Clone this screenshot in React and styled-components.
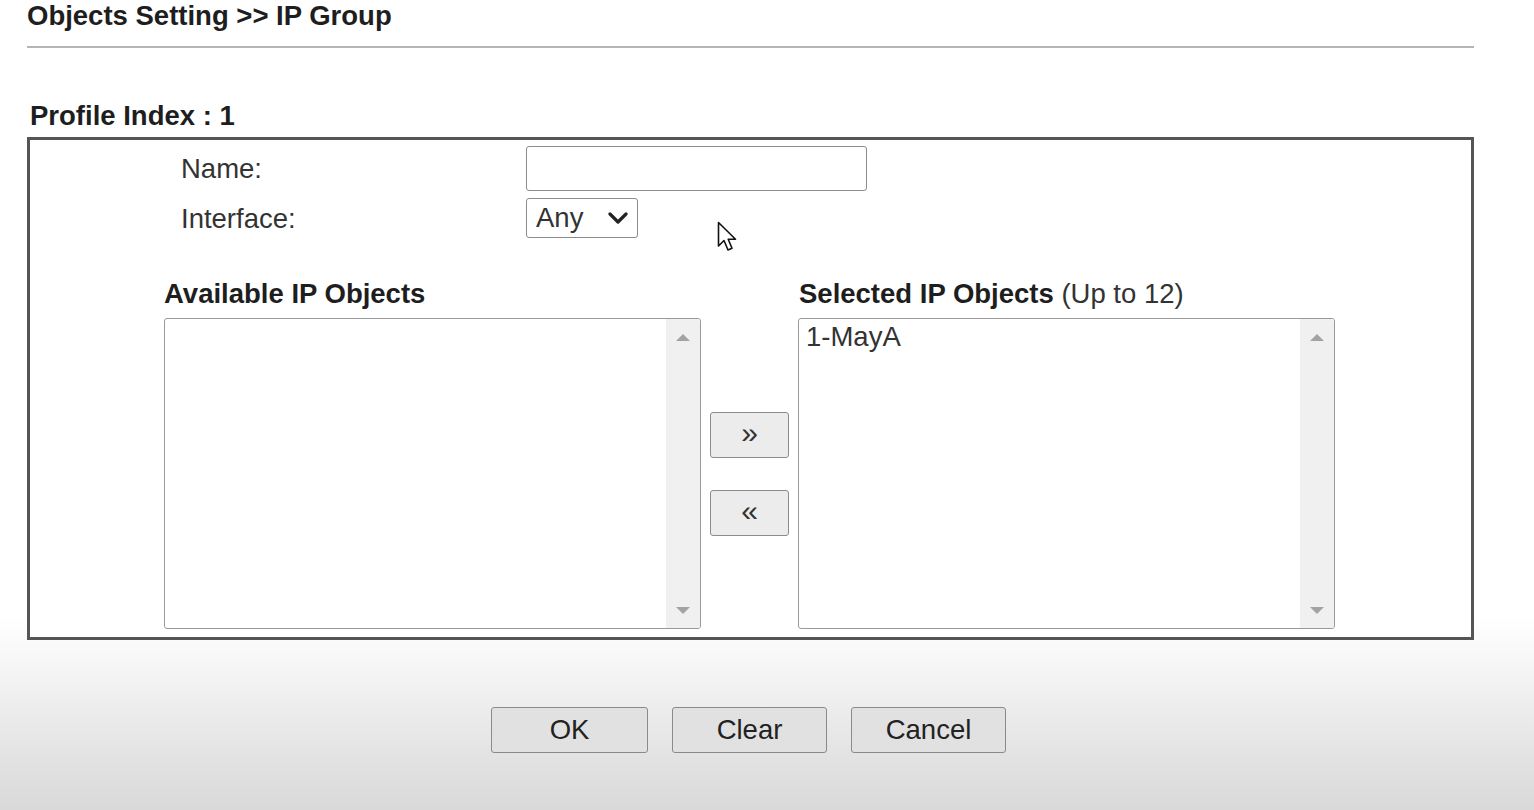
import React from "react";
import styled, { createGlobalStyle } from "styled-components";

const Global = createGlobalStyle`
  html, body { margin: 0; padding: 0; }
  html { min-height: 810px; background: linear-gradient(to bottom, #ffffff 0px, #ffffff 615px, #f7f7f7 660px, #e6e6e6 740px, #d9d9d9 810px) no-repeat; background-color: #d9d9d9; }
  body { font-family: "Liberation Sans", Arial, sans-serif; color: #222; min-height: 810px; }
  * { box-sizing: border-box; }
`;

const FS = "27.5px";

const Page = styled.div`
  position: relative;
  width: 1534px;
  height: 810px;
  padding-left: 27px;
  overflow: hidden;
`;

const Title = styled.h1`
  margin: 0;
  font-size: ${FS};
  line-height: 31px;
  font-weight: bold;
  color: #1e1e1e;
  width: 1447px;
`;

const Rule = styled.div`
  width: 1447px;
  height: 2px;
  margin-top: 15px;
  background: #b4b4b4;
`;

const Heading = styled.div`
  margin: 52px 0 6px 3px;
  font-size: ${FS};
  line-height: 31px;
  font-weight: bold;
  color: #1e1e1e;
`;

const Box = styled.div`
  width: 1447px;
  height: 503px;
  border: 3px solid #555;
  background: #fff;
  padding: 6px 0 0;
`;

const FormGrid = styled.div`
  display: grid;
  grid-template-columns: 345px auto;
  align-items: center;
  row-gap: 7px;
  padding-left: 151px;
`;

const Label = styled.div`
  font-size: ${FS};
  line-height: 31px;
  color: #333;
`;

const Control = styled.div`
  display: flex;
  align-items: center;
  height: ${(p) => p.$h}px;
`;

const TextInput = styled.div`
  width: 341px;
  height: 45px;
  border: 1.5px solid #8c8c8c;
  border-radius: 3px;
  background: #fff;
`;

const Select = styled.div`
  width: 112px;
  height: 40px;
  border: 1.5px solid #8c8c8c;
  border-radius: 3px;
  background: #fff;
  display: flex;
  align-items: center;
  justify-content: space-between;
  padding: 0 9px 0 9px;
  font-size: ${FS};
  color: #333;
`;

const Lists = styled.div`
  display: grid;
  grid-template-columns: 537px 97px 537px;
  grid-template-rows: 31px 311px;
  row-gap: 9px;
  margin-top: 40px;
  padding-left: 134px;
`;

const ColHead = styled.div`
  font-size: ${FS};
  line-height: 31px;
  font-weight: bold;
  color: #1e1e1e;
  padding-left: ${(p) => p.$pl || 0}px;
  white-space: nowrap;
`;

const Note = styled.span`
  font-weight: normal;
  color: #333;
`;

const ListBox = styled.div`
  display: flex;
  border: 1.5px solid #9a9a9a;
  border-radius: 3px;
  background: #fff;
  overflow: hidden;
`;

const ListItems = styled.div`
  flex: 1;
  padding: 2px 7px;
  font-size: ${FS};
  line-height: 31px;
  color: #333;
`;

const Scrollbar = styled.div`
  width: 34px;
  background: #f0f0f0;
  display: flex;
  flex-direction: column;
  justify-content: space-between;
  align-items: center;
  padding: 15px 0 14px;
`;

const Arrow = styled.div`
  width: 0;
  height: 0;
  border-left: 7px solid transparent;
  border-right: 7px solid transparent;
  ${(p) =>
    p.$down
      ? "border-top: 7px solid #a3a3a3;"
      : "border-bottom: 7px solid #a3a3a3;"}
`;

const Mover = styled.div`
  display: flex;
  flex-direction: column;
  justify-content: center;
  align-items: center;
  gap: 32px;
`;

const MoveButton = styled.button`
  width: 79px;
  height: 46px;
  border: 1.5px solid #8c8c8c;
  border-radius: 3px;
  background: #ececec;
  font-family: "Liberation Sans", Arial, sans-serif;
  font-size: 30px;
  line-height: 1;
  color: #333;
  padding: 0 0 4px;
`;

const Footer = styled.div`
  width: 1447px;
  display: flex;
  justify-content: center;
  gap: 24px;
  margin-top: 67px;
  padding-right: 4px;
`;

const Button = styled.button`
  width: ${(p) => p.$w}px;
  height: 46px;
  border: 1.5px solid #8a8a8a;
  border-radius: 3px;
  background: #e1e1e1;
  font-family: "Liberation Sans", Arial, sans-serif;
  font-size: ${FS};
  color: #222;
  padding: 0;
`;

const Cursor = styled.svg`
  position: absolute;
  left: 717px;
  top: 221px;
`;

const Chevron = () => (
  <svg width="20" height="14" viewBox="0 0 20 14">
    <path d="M2 3 L10 11 L18 3" fill="none" stroke="#222" strokeWidth="3.2" strokeLinecap="round" strokeLinejoin="round" />
  </svg>
);

export default function App() {
  return (
    <>
      <Global />
      <Page>
        <Title>Objects Setting &gt;&gt; IP Group</Title>
        <Rule />
        <Heading>Profile Index : 1</Heading>
        <Box>
          <FormGrid>
            <Label>Name:</Label>
            <Control $h={45}>
              <TextInput />
            </Control>
            <Label>Interface:</Label>
            <Control $h={40}>
              <Select>
                <span>Any</span>
                <Chevron />
              </Select>
            </Control>
          </FormGrid>
          <Lists>
            <ColHead>Available IP Objects</ColHead>
            <div />
            <ColHead $pl={1}>
              Selected IP Objects <Note>(Up to 12)</Note>
            </ColHead>
            <ListBox>
              <ListItems />
              <Scrollbar>
                <Arrow />
                <Arrow $down />
              </Scrollbar>
            </ListBox>
            <Mover>
              <MoveButton>»</MoveButton>
              <MoveButton>«</MoveButton>
            </Mover>
            <ListBox>
              <ListItems>1-MayA</ListItems>
              <Scrollbar>
                <Arrow />
                <Arrow $down />
              </Scrollbar>
            </ListBox>
          </Lists>
        </Box>
        <Footer>
          <Button $w={157}>OK</Button>
          <Button $w={155}>Clear</Button>
          <Button $w={155}>Cancel</Button>
        </Footer>
        <Cursor width="22" height="34" viewBox="0 0 22 34">
          <path d="M1.5 1.5 L1.5 25 L7 19.5 L11 29 L15 27.3 L11.2 18.2 L18.5 18.2 Z" fill="#fff" stroke="#111" strokeWidth="1.6" strokeLinejoin="round" />
        </Cursor>
      </Page>
    </>
  );
}
